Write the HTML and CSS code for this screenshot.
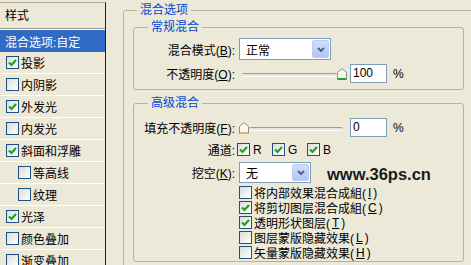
FILE: index.html
```html
<!DOCTYPE html>
<html lang="zh-CN">
<head>
    <meta charset="UTF-8">
    <title>图层样式 - 混合选项</title>
    <link rel="stylesheet" href="styles.css">
</head>
<body>
    <div class="dialog">
        <!-- lista de estilos -->
        <div class="style-list">
            <div class="list-head">样式</div>
            <div class="list-item selected">混合选项:自定</div>
            <div class="list-item"><span class="cb on"><svg viewBox="0 0 11 11"><polyline points="2,5.5 4.5,8 9,3"/></svg></span>投影</div>
            <div class="list-item"><span class="cb"></span>内阴影</div>
            <div class="list-item"><span class="cb on"><svg viewBox="0 0 11 11"><polyline points="2,5.5 4.5,8 9,3"/></svg></span>外发光</div>
            <div class="list-item"><span class="cb"></span>内发光</div>
            <div class="list-item"><span class="cb on"><svg viewBox="0 0 11 11"><polyline points="2,5.5 4.5,8 9,3"/></svg></span>斜面和浮雕</div>
            <div class="list-item sub"><span class="cb"></span>等高线</div>
            <div class="list-item sub"><span class="cb"></span>纹理</div>
            <div class="list-item"><span class="cb on"><svg viewBox="0 0 11 11"><polyline points="2,5.5 4.5,8 9,3"/></svg></span>光泽</div>
            <div class="list-item"><span class="cb"></span>颜色叠加</div>
            <div class="list-item"><span class="cb"></span>渐变叠加</div>
        </div>

        <div class="options">
            <fieldset class="group outer">
                <legend>混合选项</legend>

                <fieldset class="group">
                    <legend>常规混合</legend>
                    <div class="row first">
                        <span class="lbl">混合模式(<u>B</u>):</span>
                        <div class="combo mode">
                            <span class="combo-text">正常</span>
                            <span class="combo-btn"><svg viewBox="0 0 8 5"><polyline points="1,1 4,4 7,1"/></svg></span>
                        </div>
                    </div>
                    <div class="row">
                        <span class="lbl">不透明度(<u>O</u>):</span>
                        <div class="ctrl">
                            <div class="slider">
                                <div class="track"></div>
                                <svg class="thumb" viewBox="0 0 10 12"><path d="M0.5 11.5V4.5L5 0.5L9.5 4.5V11.5Z"/><line class="edge" x1="1" y1="11" x2="9" y2="11"/></svg>
                            </div>
                            <div class="num">100</div>
                            <span class="pct">%</span>
                        </div>
                    </div>
                </fieldset>

                <fieldset class="group advanced">
                    <legend>高级混合</legend>
                    <div class="row first">
                        <span class="lbl">填充不透明度(<u>F</u>):</span>
                        <div class="ctrl">
                            <div class="slider">
                                <svg class="thumb hot" viewBox="0 0 10 12"><path d="M0.5 11.5V4.5L5 0.5L9.5 4.5V11.5Z"/><line class="edge" x1="1" y1="11" x2="9" y2="11"/></svg>
                                <div class="track end"></div>
                            </div>
                            <div class="num">0</div>
                            <span class="pct">%</span>
                        </div>
                    </div>
                    <div class="row channels">
                        <span class="lbl">通道:</span>
                        <div class="chan-list">
                            <span class="chan"><span class="cb on"><svg viewBox="0 0 11 11"><polyline points="2,5.5 4.5,8 9,3"/></svg></span>R</span>
                            <span class="chan"><span class="cb on"><svg viewBox="0 0 11 11"><polyline points="2,5.5 4.5,8 9,3"/></svg></span>G</span>
                            <span class="chan"><span class="cb on"><svg viewBox="0 0 11 11"><polyline points="2,5.5 4.5,8 9,3"/></svg></span>B</span>
                        </div>
                    </div>
                    <div class="row knock">
                        <span class="lbl">挖空(<u>K</u>):</span>
                        <div class="ctrl">
                            <div class="combo short">
                                <span class="combo-text">无</span>
                                <span class="combo-btn"><svg viewBox="0 0 8 5"><polyline points="1,1 4,4 7,1"/></svg></span>
                            </div>
                            <span class="watermark">www.36ps.cn</span>
                        </div>
                    </div>
                    <div class="checks">
                        <div class="check"><span class="cb"></span>将内部效果混合成組(<u>I</u>)</div>
                        <div class="check"><span class="cb on"><svg viewBox="0 0 11 11"><polyline points="2,5.5 4.5,8 9,3"/></svg></span>将剪切图层混合成組(<u>C</u>)</div>
                        <div class="check"><span class="cb on"><svg viewBox="0 0 11 11"><polyline points="2,5.5 4.5,8 9,3"/></svg></span>透明形状图层(<u>T</u>)</div>
                        <div class="check"><span class="cb"></span>图层蒙版隐藏效果(<u>L</u>)</div>
                        <div class="check"><span class="cb"></span>矢量蒙版隐藏效果(<u>H</u>)</div>
                    </div>
                </fieldset>
            </fieldset>
        </div>
    </div>
</body>
</html>
```

FILE: styles.css
```css
* {
    box-sizing: border-box;
}

body {
    margin: 0;
    width: 471px;
    height: 265px;
    overflow: hidden;
    background: #ece9d8;
    font-family: Tahoma, "Liberation Sans", "Noto Sans CJK SC", sans-serif;
    font-size: 12px;
    color: #000;
}

u {
    text-underline-offset: 1px;
}

.dialog {
    display: flex;
    height: 265px;
}

/* lista da esquerda */
.style-list {
    width: 106px;
    flex: none;
    margin-top: 2px;
    border-top: 1px solid #aca899;
    border-right: 1px solid #1f1f1f;
}

.list-head {
    height: 26px;
    line-height: 26px;
    padding-left: 5px;
    border-bottom: 1px solid #9d9a8c;
    box-shadow: 0 1px 0 #fff;
    margin-bottom: 1px;
}

.list-item {
    height: 22px;
    display: flex;
    align-items: center;
    gap: 2px;
    padding-left: 6px;
    border-bottom: 1px solid #fff;
}

.list-item.selected {
    background: #316ac5;
    color: #fff;
    padding-left: 5px;
    border-bottom: none;
}

.list-item.sub {
    padding-left: 18px;
}

/* checkbox estilo XP */
.cb {
    width: 13px;
    height: 13px;
    flex: none;
    display: inline-flex;
    align-items: center;
    justify-content: center;
    border: 1px solid #1c5180;
    background: linear-gradient(135deg, #dcdcd7 0%, #fff 100%);
}

.cb svg {
    width: 11px;
    height: 11px;
}

.cb polyline {
    fill: none;
    stroke: #21a121;
    stroke-width: 2.2;
}

/* lado direito */
.options {
    flex: 1;
    padding: 3px 0 0 17px;
}

.group {
    margin: 0;
    padding: 0;
    min-width: 0;
    border: 1px solid #b5b2a2;
    border-radius: 3px;
}

.group legend {
    padding: 0 3px;
    margin-left: 14px;
    line-height: 14px;
    color: #0046d5;
}

.group.outer {
    width: 380px;
    height: 300px;
    padding-left: 9px;
}

.group.outer > legend {
    margin-left: 4px;
}

.group.outer > .group {
    width: 331px;
    margin-top: 3px;
    padding: 4px 0 6px;
}

.group.outer > .group.advanced {
    margin-top: 6px;
    padding: 8px 0 1px;
}

.row {
    display: grid;
    grid-template-columns: 101px auto;
    column-gap: 4px;
    align-items: center;
    margin-top: 4px;
}

.row.first {
    margin-top: 0;
}

.row.knock {
    margin-top: 3px;
}

.lbl {
    text-align: right;
    white-space: nowrap;
}

.ctrl {
    display: flex;
    align-items: center;
}

/* combobox */
.combo {
    display: flex;
    align-items: center;
    height: 22px;
    border: 1px solid #7f9db9;
    background: #fff;
    padding: 1px;
}

.combo.mode {
    width: 92px;
}

.combo.short {
    width: 72px;
    height: 21px;
}

.combo-text {
    flex: 1;
    padding-left: 5px;
}

.combo-btn {
    width: 17px;
    height: 100%;
    display: flex;
    align-items: center;
    justify-content: center;
    background: linear-gradient(#d2defb, #b2c6f3);
    border: 1px solid #b9ccf5;
    border-radius: 2px;
}

.combo-btn svg {
    width: 8px;
    height: 5px;
}

.combo-btn polyline {
    fill: none;
    stroke: #4d6185;
    stroke-width: 2;
}

/* slider */
.slider {
    width: 108px;
    height: 19px;
    display: flex;
    align-items: center;
}

.track {
    flex: 1;
    height: 4px;
    margin: 2px 0 0 3px;
    background: #e8e5d8;
    border-top: 1px solid #9d9c99;
    border-bottom: 1px solid #fff;
    border-radius: 2px;
}

.track.end {
    margin: 2px 4px 0 0;
}

.thumb {
    width: 10px;
    height: 12px;
    flex: none;
}

.thumb path {
    fill: #f7f7f4;
    stroke: #8e8f8f;
}

.thumb .edge {
    stroke: #21a121;
    stroke-width: 2;
}

.thumb.hot .edge {
    stroke: #e8b56a;
}

.num {
    width: 37px;
    height: 19px;
    margin-left: 3px;
    padding-left: 2px;
    line-height: 17px;
    border: 1px solid #7f9db9;
    background: #fff;
}

.pct {
    margin-left: 6px;
}

/* canais */
.row.channels {
    height: 16px;
}

.chan-list {
    display: flex;
    margin-left: -2px;
}

.chan {
    display: inline-flex;
    align-items: center;
    gap: 3px;
    width: 35px;
}

.watermark {
    margin-left: 16px;
    padding-top: 5px;
    font-family: "Liberation Sans", Arial, sans-serif;
    font-weight: bold;
    font-size: 16.5px;
    color: #1a1a1a;
}

/* opções finais */
.checks {
    margin: 1px 0 0 105px;
}

.check {
    height: 15px;
    display: flex;
    align-items: center;
    gap: 2px;
}
```
